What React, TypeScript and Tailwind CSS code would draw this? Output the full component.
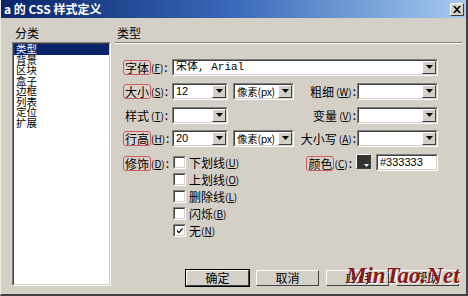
import React from "react";

const cjk = "font-['SimSun','Noto_Sans_CJK_SC',sans-serif]";

function Mn({ k }: { k: string }) {
  return (
    <span className="text-[10px]">
      (<span className="underline">{k}</span>)
    </span>
  );
}

function Label({ text, k, boxed }: { text: string; k: string; boxed?: boolean }) {
  return (
    <span className="flex items-center whitespace-nowrap">
      <span
        className={
          boxed
            ? "rounded-[3px] border border-[#d05a5a] bg-[#dcd2cc] px-[1px] leading-[13px]"
            : "border border-transparent px-[1px] leading-[13px]"
        }
      >
        {text}
      </span>
      <Mn k={k} />
      <span className="ml-[1px]">:</span>
    </span>
  );
}

function Arrow() {
  return (
    <div className="flex h-full w-[14px] shrink-0 items-center justify-center border border-t-white border-l-white border-b-[#404040] border-r-[#404040] bg-[#d4d0c8]">
      <svg width="7" height="4" viewBox="0 0 7 4">
        <path d="M0 0h7L3.5 4z" fill="#000" />
      </svg>
    </div>
  );
}

function Sunken({ className, children }: { className: string; children?: React.ReactNode }) {
  return (
    <div className={`border border-t-[#808080] border-l-[#808080] border-b-white border-r-white ${className}`}>
      <div className="flex h-full w-full items-center border border-t-[#404040] border-l-[#404040] border-b-[#d4d0c8] border-r-[#d4d0c8] bg-white">
        {children}
      </div>
    </div>
  );
}

function Combo({ w, value, valueClass }: { w: string; value?: string; valueClass?: string }) {
  return (
    <Sunken className={`h-[17px] shrink-0 ${w}`}>
      <span className={`flex-1 overflow-hidden whitespace-nowrap pl-[2px] leading-[13px] ${valueClass ?? "text-[12px]"}`}>
        {value}
      </span>
      <Arrow />
    </Sunken>
  );
}

function Check({ label, k, checked }: { label: string; k: string; checked?: boolean }) {
  return (
    <div className="flex h-[13px] items-center gap-[3px]">
      <Sunken className="h-[13px] w-[13px] shrink-0">
        {checked && (
          <svg width="9" height="9" viewBox="0 0 9 9" className="ml-[1px]">
            <path d="M1 3.5l2.2 2.3L7.5 1.2v2L3.2 7.8 1 5.5z" fill="#000" />
          </svg>
        )}
      </Sunken>
      <span className="flex items-center whitespace-nowrap text-[12px]">
        {label}
        <Mn k={k} />
      </span>
    </div>
  );
}

function Button({ text, def }: { text: string; def?: boolean }) {
  return (
    <div className={def ? "border border-black" : "border border-transparent"}>
      <div className="flex h-[16px] w-[63px] items-center justify-center border border-t-white border-l-white border-b-[#404040] border-r-[#404040] bg-[#d4d0c8] text-[12px]">
        {text}
      </div>
    </div>
  );
}

const categories = ["类型", "背景", "区块", "盒子", "边框", "列表", "定位", "扩展"];

export default function App() {
  return (
    <div
      className={`relative flex h-[296px] w-[468px] flex-col overflow-hidden border-l border-b-2 border-r-2 border-l-[#ece9e2] border-b-[#404040] border-r-[#404040] bg-[#d4d0c8] text-[12px] text-black ${cjk}`}
    >
      {/* title bar */}
      <div className="flex h-[18px] shrink-0 items-center justify-between bg-linear-to-r from-[#0a246a] via-[#3a6ab8] to-[#a6caf0] pl-[3px] pr-[2px]">
        <span className="text-[12px] font-bold leading-[12px] text-white">a 的 CSS 样式定义</span>
        <div className="flex h-[13px] w-[14px] items-center justify-center border border-t-white border-l-white border-b-[#404040] border-r-[#404040] bg-[#d4d0c8]">
          <svg width="8" height="7" viewBox="0 0 8 7">
            <path d="M0 0h2l2 2.3L6 0h2L5 3.5 8 7H6L4 4.7 2 7H0l3-3.5z" fill="#000" />
          </svg>
        </div>
      </div>

      <div className="flex flex-1">
        {/* category list */}
        <div className="ml-[11px] flex w-[99px] flex-col pb-[8px] pt-[9px]">
          <div className="pl-[3px] leading-[12px]">分类</div>
          <Sunken className="mt-[3px] flex-1">
            <div className="flex h-full w-full flex-col self-start">
              {categories.map((c, i) => (
                <div
                  key={c}
                  className={`h-[10.5px] overflow-visible pl-[2px] text-[10.5px] leading-[10.5px] ${i === 0 ? "bg-[#0a246a] text-white" : ""}`}
                >
                  {c}
                </div>
              ))}
            </div>
          </Sunken>
        </div>

        {/* type panel */}
        <div className="ml-[4px] mr-[4px] flex flex-1 flex-col pb-[7px] pt-[9px]">
          <div className="pl-[2px] leading-[12px]">类型</div>
          <div className="mt-[3px] h-px bg-[#808080]" />
          <div className="h-px bg-white" />

          <div className="mt-[14px] flex items-center">
            <div className="w-[57px] pl-[8px]">
              <Label text="字体" k="F" boxed />
            </div>
            <Combo w="w-[266px]" value="宋体, Arial" valueClass="font-['SimSun','Liberation_Mono','Noto_Sans_CJK_SC',monospace] text-[11px]" />
          </div>

          <div className="mt-[6px] flex items-center">
            <div className="w-[57px] pl-[8px]">
              <Label text="大小" k="S" boxed />
            </div>
            <Combo w="w-[56px]" value="12" valueClass="font-['Liberation_Sans',sans-serif] text-[11px]" />
            <Combo w="ml-[5px] w-[61px]" value="像素(px)" valueClass="text-[10.5px] tracking-[-0.3px]" />
            <div className="flex w-[63px] justify-end pr-[1px]">
              <Label text="粗细" k="W" />
            </div>
            <Combo w="w-[81px]" />
          </div>

          <div className="mt-[6px] flex items-center">
            <div className="w-[57px] pl-[8px]">
              <Label text="样式" k="T" />
            </div>
            <Combo w="w-[56px]" />
            <div className="w-[66px]" />
            <div className="flex w-[63px] justify-end pr-[1px]">
              <Label text="变量" k="V" />
            </div>
            <Combo w="w-[81px]" />
          </div>

          <div className="mt-[5px] flex items-center">
            <div className="w-[57px] pl-[8px]">
              <Label text="行高" k="H" boxed />
            </div>
            <Combo w="w-[56px]" value="20" valueClass="font-['Liberation_Sans',sans-serif] text-[11px]" />
            <Combo w="ml-[5px] w-[61px]" value="像素(px)" valueClass="text-[10.5px] tracking-[-0.3px]" />
            <div className="flex w-[63px] justify-end pr-[1px]">
              <Label text="大小写" k="A" />
            </div>
            <Combo w="w-[81px]" />
          </div>

          <div className="mt-[7px] flex items-start">
            <div className="w-[57px] pl-[8px]">
              <Label text="修饰" k="D" boxed />
            </div>
            <div className="flex w-[122px] flex-col gap-[4px] pl-[1px] pt-[2px]">
              <Check label="下划线" k="U" />
              <Check label="上划线" k="O" />
              <Check label="删除线" k="L" />
              <Check label="闪烁" k="B" />
              <Check label="无" k="N" checked />
            </div>
            <div className="flex w-[62px] justify-end pr-[4px]">
              <Label text="颜色" k="C" boxed />
            </div>
            <div className="flex h-[15px] w-[15px] items-end justify-end border border-t-white border-l-white border-b-[#404040] border-r-[#404040] bg-[#333333]">
              <svg width="5" height="3" viewBox="0 0 5 3" className="mb-[1px] mr-[1px]">
                <path d="M0 0h5L2.5 3z" fill="#fff" />
              </svg>
            </div>
            <Sunken className="ml-[5px] h-[17px] w-[62px]">
              <span className="pl-[2px] font-['Liberation_Sans',sans-serif] text-[11px] leading-[13px]">#333333</span>
            </Sunken>
          </div>

          <div className="mt-auto flex justify-end gap-[5px] pr-[2px]">
            <Button text="确定" def />
            <Button text="取消" />
            <Button text="应用" />
            <Button text="帮助" />
          </div>
        </div>
      </div>

      {/* watermark */}
      <div className="pointer-events-none absolute left-[345px] top-[264px] font-['Liberation_Serif',serif] text-[23px] font-bold italic leading-[24px] text-[#8a1a1a] [text-shadow:1px_1px_0_#ffffff]">
        MinTao.Net
      </div>
    </div>
  );
}
